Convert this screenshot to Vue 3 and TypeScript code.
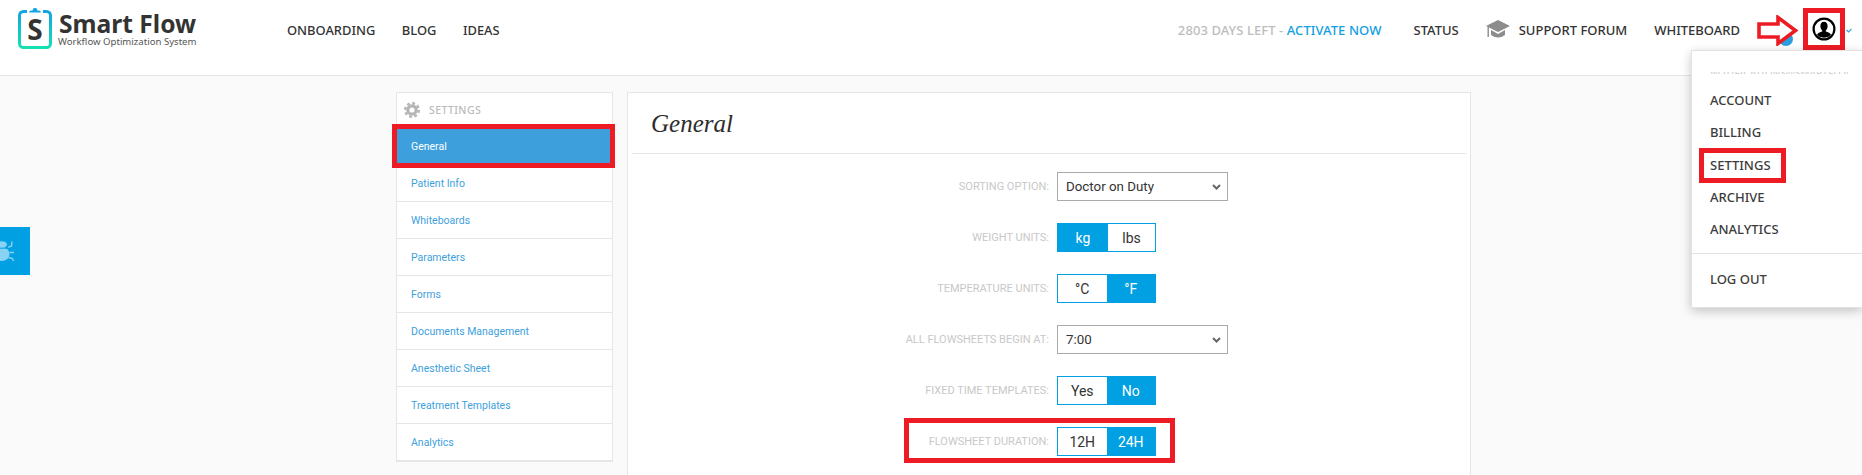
<template>
  <div class="app">
    <header class="topbar">
      <a class="logo">
        <svg class="logo-mark" width="34" height="42" viewBox="0 0 34 42">
          <defs>
            <linearGradient id="clip" x1="0" y1="0" x2="0" y2="1">
              <stop offset="0" stop-color="#12a5e6" />
              <stop offset="1" stop-color="#14e0b0" />
            </linearGradient>
          </defs>
          <rect x="1.5" y="4.5" width="31" height="36" rx="4" fill="none" stroke="url(#clip)" stroke-width="3" />
          <rect x="9" y="3" width="16" height="4" fill="#fff" />
          <path d="M11 5.5 Q11 3.5 13.5 3.5 L14.5 3.5 Q15 0.8 17 0.8 Q19 0.8 19.5 3.5 L20.5 3.5 Q23 3.5 23 5.5 Z" fill="#12a5e6" />
          <text x="17" y="33" text-anchor="middle" class="logo-s">S</text>
        </svg>
        <span class="logo-text">
          <strong>Smart Flow</strong>
          <small>Workflow Optimization System</small>
        </span>
      </a>
      <nav class="nav">
        <a v-for="item in leftNav" :key="item">{{ item }}</a>
      </nav>
      <div class="right">
        <span class="trial">2803 DAYS LEFT - <b>ACTIVATE NOW</b></span>
        <a class="link">STATUS</a>
        <a class="link support">
          <svg width="24" height="22" viewBox="0 0 24 22" fill="#8c8c8c">
            <path d="M12 1 L24 7 L12 13 L0 7 Z" />
            <path d="M5 11 L12 15 L19 11 L19 16 Q12 21 5 16 Z" />
            <rect x="1.5" y="8" width="1.4" height="10" />
          </svg>
          SUPPORT FORUM
        </a>
        <a class="link">WHITEBOARD</a>
        <span class="notify"></span>
        <svg class="arrow" width="42" height="31" viewBox="0 0 42 31">
          <path d="M2 9 H21 V2.5 L38.5 15.5 L21 28.5 V22 H2 Z" fill="#fff" stroke="#ed1c24" stroke-width="3.6" />
        </svg>
        <span class="avatar">
          <svg width="24" height="24" viewBox="0 0 24 24">
            <circle cx="12" cy="12" r="10.4" fill="#fff" stroke="#000" stroke-width="2.2" />
            <path d="M12 4.8 C9.6 4.8 8.4 6.6 8.4 9 C8.4 11 9.2 12.6 10.2 13.4 L10.2 14.6 C8 15.2 5.8 16 5 18 A10 10 0 0 0 19 18 C18.2 16 16 15.2 13.8 14.6 L13.8 13.4 C14.8 12.6 15.6 11 15.6 9 C15.6 6.6 14.4 4.8 12 4.8 Z" fill="#000" />
          </svg>
        </span>
        <svg class="caret" width="6" height="5" viewBox="0 0 6 5">
          <path d="M0.5 2 L2.6 4 L5.5 0.8" fill="none" stroke="#2ea7e6" stroke-width="1.2" />
        </svg>
      </div>
    </header>

    <div class="menu">
      <div class="menu-cut"><span>NOTIFICATIONS@SMARTFLOWSHEET</span></div>
      <a v-for="item in menuItems" :key="item" class="menu-item" :class="{ marked: item === 'SETTINGS' }">{{ item }}</a>
      <div class="menu-line"></div>
      <a class="menu-item">LOG OUT</a>
    </div>

    <a class="bug">
      <svg width="16" height="22" viewBox="0 0 16 22" fill="#8ad2f3">
        <ellipse cx="2" cy="4.5" rx="5" ry="3.2" />
        <ellipse cx="2" cy="14" rx="7.5" ry="7" />
        <path d="M8 7.5 L11.5 6 L12 1.5 M9.5 12.5 L14 12.5 M8.5 17.5 L12.5 18.5 L13.5 21" fill="none" stroke="#8ad2f3" stroke-width="1.4" />
        <path d="M0 8.2 H10" stroke="#00a0e3" stroke-width="1" />
      </svg>
    </a>

    <main class="page">
      <aside class="side">
        <div class="side-head">
          <svg width="16" height="16" viewBox="0 0 16 16" fill="none" stroke="#b5b5b5">
            <circle cx="8" cy="8" r="4.2" stroke-width="3.2" />
            <circle cx="8" cy="8" r="6.8" stroke-width="2.4" stroke-dasharray="2.9 2.44" />
          </svg>
          <span>SETTINGS</span>
        </div>
        <a
          v-for="(item, i) in sideItems"
          :key="item"
          class="side-item"
          :class="{ active: i === 0 }"
        >{{ item }}</a>
      </aside>

      <section class="panel">
        <h1>General</h1>
        <form class="form" @submit.prevent>
          <div v-for="row in rows" :key="row.label" class="row" :class="{ marked: row.marked }">
            <label>{{ row.label }}</label>
            <div v-if="row.select" class="select-wrap">
              <select class="select">
                <option>{{ row.select }}</option>
              </select>
              <svg class="chevron" width="9" height="6" viewBox="0 0 9 6">
                <path d="M1 1 L4.5 4.5 L8 1" fill="none" stroke="#666" stroke-width="2" />
              </svg>
            </div>
            <div v-else class="toggle" :class="{ wide: row.active === 0 }">
              <button
                v-for="(opt, i) in row.options"
                :key="opt"
                type="button"
                :class="{ on: i === row.active }"
              >{{ opt }}</button>
            </div>
          </div>
        </form>
      </section>
    </main>
  </div>
</template>

<script setup lang="ts">
interface FormRow {
  label: string
  select?: string
  options?: string[]
  active?: number
  marked?: boolean
}

const leftNav = ['ONBOARDING', 'BLOG', 'IDEAS']
const menuItems = ['ACCOUNT', 'BILLING', 'SETTINGS', 'ARCHIVE', 'ANALYTICS']
const sideItems = [
  'General',
  'Patient Info',
  'Whiteboards',
  'Parameters',
  'Forms',
  'Documents Management',
  'Anesthetic Sheet',
  'Treatment Templates',
  'Analytics',
]

const rows: FormRow[] = [
  { label: 'SORTING OPTION:', select: 'Doctor on Duty' },
  { label: 'WEIGHT UNITS:', options: ['kg', 'lbs'], active: 0 },
  { label: 'TEMPERATURE UNITS:', options: ['°C', '°F'], active: 1 },
  { label: 'ALL FLOWSHEETS BEGIN AT:', select: '7:00' },
  { label: 'FIXED TIME TEMPLATES:', options: ['Yes', 'No'], active: 1 },
  { label: 'FLOWSHEET DURATION:', options: ['12H', '24H'], active: 1, marked: true },
]
</script>

<style>
html,
body {
  margin: 0;
  height: 100%;
  overflow: hidden;
  background: #fafafa;
}
</style>

<style scoped>
.app {
  position: relative;
  height: 475px;
  overflow: hidden;
  background: #fafafa;
  font-family: "Noto Sans", sans-serif;
  color: #333;
}

.topbar {
  display: flex;
  align-items: center;
  height: 60px;
  padding: 0 10px 15px 18px;
  background: #fff;
  border-bottom: 1px solid #e6e6e6;
}

.logo {
  display: flex;
  align-items: flex-start;
  align-self: flex-start;
  padding-top: 7px;
  width: 269px;
}

.logo-mark {
  margin-right: 7px;
}

.logo-s {
  font: 700 28px "Noto Sans", sans-serif;
  fill: #333;
}

.logo-text {
  display: flex;
  flex-direction: column;
  padding-top: 7px;
}

.logo-text strong {
  font-size: 24.6px;
  line-height: 20px;
  font-weight: 700;
  color: #333;
}

.logo-text small {
  margin-top: 2px;
  margin-left: -1px;
  font-size: 9.6px;
  line-height: 12px;
  color: #555;
}

.nav {
  display: flex;
  gap: 26.5px;
  font-size: 12.9px;
  font-weight: 500;
}

.right {
  display: flex;
  align-items: center;
  margin-left: auto;
  position: relative;
  font-size: 13px;
  font-weight: 500;
  white-space: nowrap;
}

.trial {
  color: #bdbdbd;
  margin-right: 32px;
  letter-spacing: 0.08px;
}

.trial b {
  font-weight: 500;
  color: #12a0e3;
}

.link {
  margin-right: 27px;
}

.support {
  display: flex;
  align-items: center;
  gap: 9px;
}

.right .link:nth-of-type(3) {
  margin-right: 68px;
}

.notify {
  position: absolute;
  right: 59px;
  top: 18px;
  width: 14px;
  height: 14px;
  border-radius: 50%;
  background: #2b9fe0;
}

.arrow {
  position: absolute;
  right: 53px;
  top: 1px;
}

.avatar {
  position: relative;
  top: -1px;
  display: flex;
  align-items: center;
  justify-content: center;
  width: 32px;
  height: 32px;
  background: #fff;
  outline: 5px solid #ed1c24;
}

.caret {
  margin-left: 6px;
}

.menu {
  position: absolute;
  top: 50px;
  right: 0;
  z-index: 5;
  width: 171px;
  height: 258px;
  box-sizing: border-box;
  padding-top: 21px;
  background: #fff;
  border: 1px solid #e2e2e2;
  border-right: 0;
  box-shadow: 0 3px 10px rgba(0, 0, 0, 0.22);
  font-size: 13px;
  font-weight: 500;
  color: #3c3c3c;
}

.menu-cut {
  height: 2px;
  margin: 0 14px 14px 18px;
  overflow: hidden;
  font-size: 10px;
  line-height: 2px;
  color: #d0d0d0;
  white-space: nowrap;
}

.menu-item {
  display: block;
  width: fit-content;
  height: 25px;
  line-height: 25px;
  margin: 0 0 7.3px 12px;
  padding: 0 6px;
}

.menu-item.marked {
  padding-right: 10px;
  outline: 5px solid #ed1c24;
}

.menu-line {
  height: 1px;
  margin: 11px 0 13px;
  background: #e2e2e2;
}

.bug {
  position: absolute;
  left: 0;
  top: 227px;
  display: flex;
  align-items: center;
  width: 30px;
  height: 48px;
  background: #00a0e3;
}

.page {
  display: flex;
  align-items: flex-start;
  gap: 14px;
  padding: 16px 0 0 396px;
}

.side {
  display: flex;
  flex-direction: column;
  width: 217px;
  box-sizing: border-box;
  background: #fff;
  border: 1px solid #e6e6e6;
  border-bottom-width: 2px;
  font-family: Roboto, Arial, sans-serif;
}

.side-head {
  display: flex;
  align-items: center;
  gap: 9px;
  height: 34px;
  padding: 0 0 2px 7px;
  font: 500 10.5px "Noto Sans", sans-serif;
  letter-spacing: 0.4px;
  color: #bbb;
}

.side-item {
  display: block;
  height: 37px;
  box-sizing: border-box;
  padding-left: 14px;
  line-height: 37px;
  font-size: 10.5px;
  color: #3e9fdd;
  border-top: 1px solid #e6e6e6;
}

.side-item.active {
  position: relative;
  height: 34px;
  line-height: 35px;
  margin-right: 2px;
  border-top: 0;
  background: #3e9fdd;
  color: #fff;
  outline: 5px solid #ed1c24;
}

.side-item.active + .side-item {
  height: 38px;
  border-top: 0;
  line-height: 41px;
}

.panel {
  width: 844px;
  height: 400px;
  box-sizing: border-box;
  padding: 0 4px;
  background: #fff;
  border: 1px solid #e6e6e6;
}

.panel h1 {
  height: 61px;
  margin: 0;
  box-sizing: border-box;
  padding: 14px 0 0 19px;
  font: italic 400 25px/34px "Liberation Serif", Georgia, serif;
  color: #2d2d2d;
  border-bottom: 1px solid #e6e6e6;
}

.form {
  display: flex;
  flex-direction: column;
  gap: 22px;
  padding-top: 18px;
}

.row {
  position: relative;
  display: flex;
  align-items: center;
  height: 29px;
  font-family: Roboto, Arial, sans-serif;
}

.row label {
  width: 417px;
  margin-right: 8px;
  text-align: right;
  font-size: 11px;
  color: #c8c8c8;
}

.row.marked::after {
  content: '';
  position: absolute;
  left: 272px;
  top: -9px;
  width: 271px;
  height: 45px;
  box-sizing: border-box;
  border: 5px solid #ed1c24;
  pointer-events: none;
}

.select-wrap {
  position: relative;
  width: 171px;
  height: 29px;
}

.select {
  width: 100%;
  height: 100%;
  box-sizing: border-box;
  padding-left: 8px;
  border: 1px solid #aaa;
  border-radius: 0;
  appearance: none;
  background: #fff;
  font: 13.33px Roboto, Arial, sans-serif;
  color: #333;
}

.chevron {
  position: absolute;
  right: 7px;
  top: 12px;
  pointer-events: none;
}

.toggle {
  display: flex;
  width: 99px;
  height: 29px;
  box-sizing: border-box;
  border: 1px solid #00a0e3;
}

.toggle button {
  flex: 1;
  padding: 0;
  border: 0;
  background: #fff;
  font: 14px Roboto, Arial, sans-serif;
  color: #333;
}

.toggle button.on {
  background: #00a0e3;
  color: #fff;
}

.toggle.wide button:first-child {
  flex: 0 0 50px;
}
</style>
